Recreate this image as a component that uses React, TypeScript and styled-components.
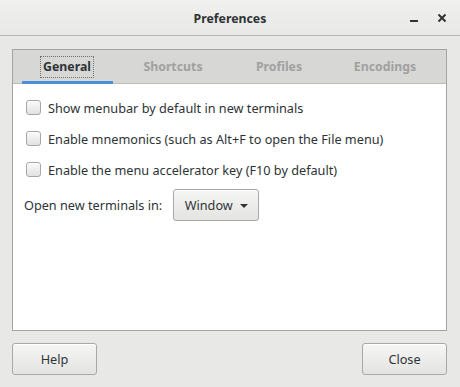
import React from 'react';
import styled, { createGlobalStyle } from 'styled-components';

const GlobalStyle = createGlobalStyle`
  html, body {
    margin: 0;
    padding: 0;
    background: #e8e8e7;
  }
  body {
    font-family: "Noto Sans", "DejaVu Sans", sans-serif;
    font-size: 12.7px;
    color: #2e3436;
  }
`;

const Window = styled.div`
  width: 460px;
  height: 387px;
  display: flex;
  flex-direction: column;
  background: #e8e8e7;
`;

const TitleBar = styled.div`
  height: 35px;
  border-bottom: 1px solid #b6b6b3;
  background: linear-gradient(#f0f0ef, #e8e8e7);
  display: flex;
  align-items: center;
  position: relative;
`;

const Title = styled.div`
  flex: 1;
  text-align: center;
  font-weight: bold;
  font-size: 12.3px;
  padding-top: 1px;
`;

const WindowControls = styled.div`
  position: absolute;
  right: 13px;
  top: 0;
  height: 35px;
  display: flex;
  align-items: center;
  gap: 18px;
`;

const ControlIcon = styled.svg`
  display: block;
`;

const Body = styled.div`
  flex: 1;
  display: flex;
  flex-direction: column;
  padding: 13px 13px 12px 12px;
  gap: 12px;
`;

const Notebook = styled.div`
  height: 282px;
  box-sizing: border-box;
  border: 1px solid #a4a4a2;
  display: flex;
  flex-direction: column;
  background: #fff;
`;

const TabBar = styled.div`
  height: 33px;
  background: #d7d7d6;
  border-bottom: 1px solid #bdbdbb;
  display: flex;
  padding-left: 1px;
`;

const Tab = styled.div<{ active?: boolean }>`
  width: 106px;
  display: flex;
  align-items: center;
  justify-content: center;
  position: relative;
  font-size: 12.3px;
  color: ${({ active }) => (active ? '#2e3436' : '#a0a19f')};
  font-weight: bold;
  ${({ active }) =>
    active &&
    `
    &::after {
      content: '';
      position: absolute;
      left: 8px;
      right: 7px;
      bottom: -1px;
      height: 3px;
      background: #4a90d9;
    }
  `}
`;

const TabLabel = styled.span<{ focused?: boolean }>`
  padding: 1px 2px 2px;
  border: 1px dotted ${({ focused }) => (focused ? '#6f6f6d' : 'transparent')};
`;

const Page = styled.div`
  padding: 8px 12px 0 13px;
  display: flex;
  flex-direction: column;
`;

const CheckRow = styled.label`
  height: 31px;
  display: flex;
  align-items: center;
  gap: 7px;
`;

const Box = styled.span`
  width: 13px;
  height: 13px;
  border: 1px solid #a7a7a5;
  border-radius: 3px;
  background: linear-gradient(#fafafa, #e2e2e1);
  box-shadow: inset 0 1px #fff;
`;

const ComboRow = styled.div`
  margin-top: 4px;
  margin-left: -2px;
  display: flex;
  align-items: center;
  gap: 11px;
`;

const Button = styled.button<{ width?: number }>`
  box-sizing: border-box;
  height: 32px;
  width: ${({ width }) => width ?? 85}px;
  border: 1px solid #a8a8a6;
  border-radius: 3px;
  background: linear-gradient(#f6f6f5, #e3e3e2);
  box-shadow: inset 0 1px #fff;
  font-family: inherit;
  font-size: 12.7px;
  color: #2e3436;
  display: inline-flex;
  align-items: center;
  justify-content: center;
  gap: 7px;
  padding: 0;
`;

const Arrow = styled.span`
  width: 0;
  height: 0;
  border-left: 4px solid transparent;
  border-right: 4px solid transparent;
  border-top: 4px solid #2e3436;
  margin-top: 1px;
`;

const Actions = styled.div`
  display: flex;
  justify-content: space-between;
`;

const options = [
  'Show menubar by default in new terminals',
  'Enable mnemonics (such as Alt+F to open the File menu)',
  'Enable the menu accelerator key (F10 by default)',
];

const tabs = ['General', 'Shortcuts', 'Profiles', 'Encodings'];

export default function App() {
  return (
    <>
      <GlobalStyle />
      <Window>
        <TitleBar>
          <Title>Preferences</Title>
          <WindowControls>
            <ControlIcon width="10" height="10" viewBox="0 0 10 10">
              <rect x="1" y="7" width="8" height="2" fill="#2e3436" />
            </ControlIcon>
            <ControlIcon width="10" height="10" viewBox="0 0 10 10">
              <path d="M1.5 1.5 L8.5 8.5 M8.5 1.5 L1.5 8.5" stroke="#2e3436" strokeWidth="2" />
            </ControlIcon>
          </WindowControls>
        </TitleBar>
        <Body>
          <Notebook>
            <TabBar>
              {tabs.map((t, i) => (
                <Tab key={t} active={i === 0}>
                  <TabLabel focused={i === 0}>{t}</TabLabel>
                </Tab>
              ))}
            </TabBar>
            <Page>
              {options.map((o) => (
                <CheckRow key={o}>
                  <Box />
                  {o}
                </CheckRow>
              ))}
              <ComboRow>
                <span>Open new terminals in:</span>
                <Button width={86}>
                  Window
                  <Arrow />
                </Button>
              </ComboRow>
            </Page>
          </Notebook>
          <Actions>
            <Button>Help</Button>
            <Button>Close</Button>
          </Actions>
        </Body>
      </Window>
    </>
  );
}
